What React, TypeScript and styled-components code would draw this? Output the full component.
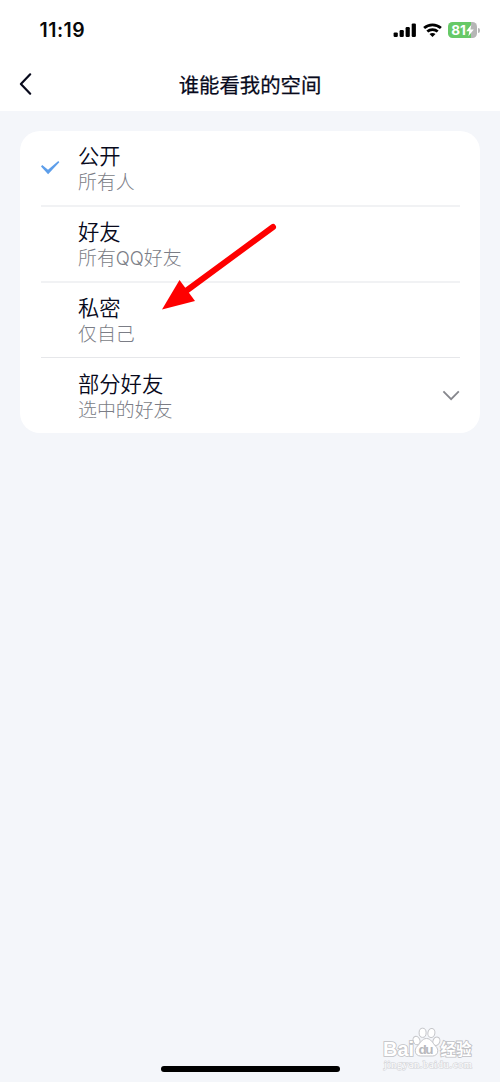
import React from "react";
import styled, { createGlobalStyle } from "styled-components";

const GlobalStyle = createGlobalStyle`
  * { box-sizing: border-box; }
  body {
    margin: 0;
    background: #f4f6fa;
    font-family: "Noto Sans CJK SC", sans-serif;
  }
`;

const Screen = styled.div`
  position: relative;
  display: flex;
  flex-direction: column;
  width: 500px;
  height: 1082px;
  overflow: hidden;
  background: #f4f6fa;
`;

const StatusBar = styled.div`
  display: flex;
  align-items: center;
  justify-content: space-between;
  height: 60px;
  padding: 0 20.5px 0 39.5px;
  background: #fff;
`;

const Clock = styled.span`
  font: 600 19.4px/24px Inter, sans-serif;
  letter-spacing: 0.5px;
  color: #080808;
`;

const StatusIcons = styled.div`
  display: flex;
  align-items: center;
  gap: 6px;
`;

const Battery = styled.div`
  display: flex;
  align-items: center;
  gap: 1px;
`;

const BatteryBody = styled.div`
  display: flex;
  align-items: center;
  justify-content: center;
  width: 29px;
  height: 16px;
  border-radius: 4.5px;
  background: linear-gradient(90deg, #67c967 81%, #b6b6b6 81%);
  color: #fff;
  font: 700 13.5px/16px Inter, sans-serif;
`;

const BatteryCap = styled.div`
  width: 1.5px;
  height: 5px;
  border-radius: 0 2px 2px 0;
  background: #b6b6b6;
`;

const NavBar = styled.header`
  display: grid;
  grid-template-columns: 52px 1fr 52px;
  align-items: center;
  height: 51px;
  padding-bottom: 4px;
  background: #fff;
`;

const BackButton = styled.button`
  display: flex;
  padding: 1px 0 0 18px;
  border: 0;
  background: none;
`;

const NavTitle = styled.h1`
  margin: 0;
  text-align: center;
  font-size: 20.4px;
  line-height: 30px;
  font-weight: 400;
  -webkit-text-stroke: 0.25px #080a1c;
  color: #080a1c;
`;

const Card = styled.main`
  margin: 20px 20px 0;
  padding: 0 20.5px;
  border-radius: 20px;
  background: #fff;
`;

const Row = styled.div<{ $height: number; $divider: string; $top: number }>`
  display: grid;
  grid-template-columns: 37.5px 1fr 18px;
  height: ${(p) => p.$height}px;
  padding-top: ${(p) => p.$top}px;
  border-bottom: ${(p) => p.$divider};
`;

const IconSlot = styled.div`
  display: flex;
  align-items: flex-start;
  padding-top: 20px;
`;

const RowTitle = styled.div`
  margin-bottom: 1px;
  font-size: 21.3px;
  line-height: 27px;
  font-weight: 350;
  color: #080a1c;
`;

const RowHint = styled.div`
  font-size: 18.9px;
  line-height: 24px;
  font-weight: 300;
  color: #7b7d86;
`;

const Latin = styled.span`
  font-family: Inter, sans-serif;
  font-size: 18.5px;
`;

const Arrow = styled.svg`
  position: absolute;
  left: 155px;
  top: 220px;
`;

const Watermark = styled.svg`
  position: absolute;
  left: 376px;
  top: 1022px;
`;

const HomeIndicator = styled.div`
  align-self: center;
  width: 179px;
  height: 6px;
  margin: auto 0 10px;
  border-radius: 3px;
  background: #000;
`;

const SignalIcon = () => (
  <svg width="24" height="15" viewBox="0 0 24 15">
    <rect x="0.6" y="9.4" width="4.2" height="4.6" rx="1.2" />
    <rect x="6.6" y="7" width="4.2" height="7" rx="1.2" />
    <rect x="12.6" y="4" width="4.2" height="10" rx="1.2" />
    <rect x="18.7" y="0.4" width="4.2" height="13.6" rx="1.2" />
  </svg>
);

const WifiIcon = () => (
  <svg width="19" height="15" viewBox="0 0 19 15" fill="none" stroke="#000" strokeWidth="2.7">
    <path d="M1.1 5.1C5.8.7 13.2.7 17.9 5.1" />
    <path d="M4.3 8.6c2.9-2.7 7.5-2.7 10.4 0" />
    <path d="M9.5 14.1 6.5 11.1c1.7-1.5 4.3-1.5 6 0Z" fill="#000" stroke="none" />
  </svg>
);

const BoltIcon = () => (
  <svg width="8" height="13" viewBox="0 0 8 13" fill="#fff">
    <path d="M5.3.8.2 7.3h3.1l-.9 5L7.8 5.5H4.6Z" />
  </svg>
);

const BackIcon = () => (
  <svg width="16" height="24" viewBox="0 0 16 24" fill="none" stroke="#080a1c" strokeWidth="2.2" strokeLinecap="round" strokeLinejoin="round">
    <path d="M12.2 2.3 2.9 12 12.2 21.7" />
  </svg>
);

const CheckIcon = () => (
  <svg width="19" height="14" viewBox="0 0 19 14" fill="#5d9eea">
    <path d="M0 5.5 1.2 4 7 8.8 17.3 0 18.3 1.2 7.1 13.2Z" />
  </svg>
);

const ChevronIcon = () => (
  <svg width="18" height="12" viewBox="0 0 18 12" fill="none" stroke="#86878d" strokeWidth="1.8">
    <path d="M1.4 2.3 9.1 10.2 16.8 2.3" />
  </svg>
);

const thick = "2px solid #f1f2f4";
const thin = "1px solid #e6e7ea";

const options = [
  { title: "公开", hint: "所有人", height: 76, top: 10, divider: thick, selected: true },
  { title: "好友", hint: <>所有<Latin>QQ</Latin>好友</>, height: 76, top: 10, divider: thick },
  { title: "私密", hint: "仅自己", height: 75, top: 10, divider: thin },
  { title: "部分好友", hint: "选中的好友", height: 75, top: 11, divider: "0", expandable: true },
];

export default function App() {
  return (
    <Screen>
      <GlobalStyle />
      <StatusBar>
        <Clock>11:19</Clock>
        <StatusIcons>
          <SignalIcon />
          <WifiIcon />
          <Battery>
            <BatteryBody>
              81
              <BoltIcon />
            </BatteryBody>
            <BatteryCap />
          </Battery>
        </StatusIcons>
      </StatusBar>
      <NavBar>
        <BackButton aria-label="返回">
          <BackIcon />
        </BackButton>
        <NavTitle>谁能看我的空间</NavTitle>
      </NavBar>
      <Card>
        {options.map((o) => (
          <Row key={o.title} $height={o.height} $divider={o.divider} $top={o.top}>
            <IconSlot>{o.selected && <CheckIcon />}</IconSlot>
            <div>
              <RowTitle>{o.title}</RowTitle>
              <RowHint>{o.hint}</RowHint>
            </div>
            <IconSlot>{o.expandable && <ChevronIcon />}</IconSlot>
          </Row>
        ))}
      </Card>
      <Arrow width="130" height="100" viewBox="155 220 130 100">
        <path d="M273 227 186 291" stroke="#fe0000" strokeWidth="6" strokeLinecap="round" />
        <path d="M162 309.5 179.5 280 195 301Z" fill="#fe0000" />
      </Arrow>
      <HomeIndicator />
      <Watermark width="104" height="52" viewBox="376 1022 104 52">
        <g fill="#fff" stroke="#c4c5c9" strokeWidth="1">
          <ellipse cx="416.5" cy="1040.5" rx="3.4" ry="4.3" transform="rotate(-20 416.5 1040.5)" />
          <ellipse cx="422.6" cy="1032.8" rx="3.5" ry="4.6" />
          <ellipse cx="431.4" cy="1033" rx="3.5" ry="4.6" transform="rotate(10 431.4 1033)" />
          <ellipse cx="436.4" cy="1041.2" rx="3.4" ry="4.3" transform="rotate(20 436.4 1041.2)" />
          <path d="M426.5 1038.5c4.5 0 6 4.5 9 7.5 4 3.5 2.5 10-3 10H420.5c-5.5 0-7-6.500-3-10 3-3 4.500-7.500 9-7.500Z" />
        </g>
        <g fill="#fff" stroke="#bfc0c4" strokeWidth="1.7" paintOrder="stroke" fontFamily="Liberation Sans, sans-serif" fontWeight="700">
          <text x="383" y="1055.5" fontSize="20" textLength="31" lengthAdjust="spacingAndGlyphs">Bai</text>
          <text x="440.5" y="1054.5" fontSize="15.5" fontFamily="Noto Sans CJK SC, sans-serif">经验</text>
        </g>
        <text x="418.5" y="1054" fontSize="13.5" fill="#b8b9bd" fontFamily="Liberation Sans, sans-serif" fontWeight="700" textLength="15">du</text>
        <text x="384" y="1067.5" fontSize="10.5" fill="#fff" stroke="#d3d4d8" strokeWidth="1.2" paintOrder="stroke" fontFamily="Liberation Serif, serif" textLength="88">jingyan.baidu.com</text>
      </Watermark>
    </Screen>
  );
}
